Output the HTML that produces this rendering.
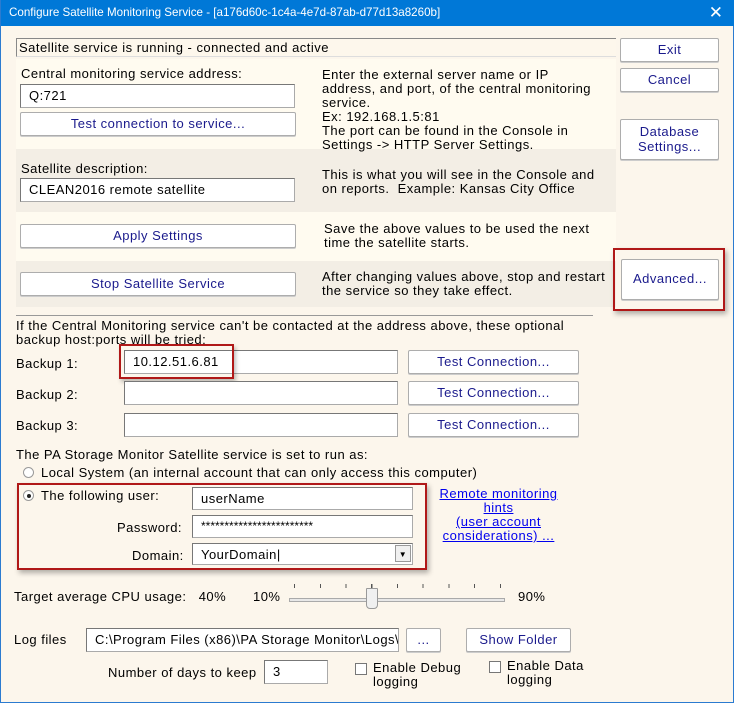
<!DOCTYPE html>
<html><head><meta charset="utf-8"><style>
*{box-sizing:border-box;margin:0;padding:0}
body{width:734px;height:703px;overflow:hidden;background:#fcf6ec;font-family:"Liberation Sans",Tahoma,sans-serif;font-size:13px;letter-spacing:0.48px;color:#000;position:relative;border:1px solid #2b7bd0;border-top:none}
.a{position:absolute;white-space:nowrap}
.tb{position:absolute;left:0;top:0;width:734px;height:26px;background:#0078d7;color:#fff;font-size:11.6px;letter-spacing:0;padding:6px 0 0 8px}
.btn{position:absolute;background:#fff;border:1px solid #adadad;border-radius:2px;box-shadow:0 1px 0 #ccc;color:#1a1a8c;text-align:center;line-height:1.1;display:flex;align-items:center;justify-content:center}
.in{position:absolute;background:#fff;border:1px solid #aaa;border-top-color:#777;border-left-color:#777;padding:3px 0 0 8px;white-space:nowrap;overflow:hidden}
.red{position:absolute;border:2px solid #b01818;box-shadow:2px 3px 5px rgba(0,0,0,.3)}
.lk{color:#0000ee;text-decoration:underline;text-align:center;line-height:14px}
.rad{position:absolute;width:11px;height:11px;border:1px solid #999;border-radius:50%;background:#fff}
.cb{position:absolute;width:12px;height:12px;border:1px solid #777;background:#fff}
</style></head><body>
<div class="tb">Configure Satellite Monitoring Service - [a176d60c-1c4a-4e7d-87ab-d77d13a8260b]<span style="position:absolute;right:12px;top:3px;font-size:17px">✕</span></div>

<div class="a" style="left:15px;top:38px;width:600px;height:19px;border:1px solid #888;border-right:none;border-bottom-color:#ddd;padding:1px 0 0 2px;background:#fdf7ec">Satellite service is running - connected and active</div>
<div class="a" style="left:15px;top:59px;width:600px;height:90px;background:#fffbf0"></div>
<div class="a" style="left:15px;top:149px;width:600px;height:63px;background:#f3eee5"></div>
<div class="a" style="left:15px;top:212px;width:600px;height:49px;background:#fffbf0"></div>
<div class="a" style="left:15px;top:261px;width:600px;height:46px;background:#f3eee5"></div>

<div class="a" style="left:20px;top:66px">Central monitoring service address:</div>
<div class="in" style="left:19px;top:84px;width:275px;height:24px">Q:721</div>
<div class="btn" style="left:19px;top:112px;width:276px;height:24px">Test connection to service...</div>
<div class="a" style="left:321px;top:68px;line-height:14px">Enter the external server name or IP<br>address, and port, of the central monitoring<br>service.<br>Ex: 192.168.1.5:81<br>The port can be found in the Console in<br>Settings -&gt; HTTP Server Settings.</div>

<div class="a" style="left:20px;top:161px">Satellite description:</div>
<div class="in" style="left:19px;top:178px;width:275px;height:24px">CLEAN2016 remote satellite</div>
<div class="a" style="left:321px;top:168px;line-height:14px">This is what you will see in the Console and<br>on reports.&nbsp; Example: Kansas City Office</div>

<div class="btn" style="left:19px;top:224px;width:276px;height:24px">Apply Settings</div>
<div class="a" style="left:323px;top:222px;line-height:14px">Save the above values to be used the next<br>time the satellite starts.</div>
<div class="btn" style="left:19px;top:272px;width:276px;height:24px">Stop Satellite Service</div>
<div class="a" style="left:321px;top:270px;line-height:14px">After changing values above, stop and restart<br>the service so they take effect.</div>

<div class="btn" style="left:619px;top:38px;width:99px;height:24px">Exit</div>
<div class="btn" style="left:619px;top:68px;width:99px;height:24px">Cancel</div>
<div class="btn" style="left:619px;top:119px;width:99px;height:41px">Database<br>Settings...</div>
<div class="red" style="left:612px;top:248px;width:112px;height:63px"></div>
<div class="btn" style="left:620px;top:259px;width:98px;height:41px">Advanced...</div>

<div class="a" style="left:15px;top:315px;width:577px;border-top:1px solid #999"></div>
<div class="a" style="left:15px;top:319px;line-height:14px">If the Central Monitoring service can't be contacted at the address above, these optional<br>backup host:ports will be tried:</div>
<div class="a" style="left:15px;top:356px">Backup 1:</div>
<div class="in" style="left:123px;top:350px;width:274px;height:24px">10.12.51.6.81</div>
<div class="btn" style="left:407px;top:350px;width:171px;height:24px">Test Connection...</div>
<div class="red" style="left:118px;top:344px;width:115px;height:35px;box-shadow:2px 3px 4px rgba(0,0,0,.25)"></div>
<div class="a" style="left:15px;top:387px">Backup 2:</div>
<div class="in" style="left:123px;top:381px;width:274px;height:24px"></div>
<div class="btn" style="left:407px;top:381px;width:171px;height:24px">Test Connection...</div>
<div class="a" style="left:15px;top:418px">Backup 3:</div>
<div class="in" style="left:123px;top:413px;width:274px;height:24px"></div>
<div class="btn" style="left:407px;top:413px;width:171px;height:24px">Test Connection...</div>

<div class="a" style="left:15px;top:447px">The PA Storage Monitor Satellite service is set to run as:</div>
<div class="rad" style="left:22px;top:467px"></div>
<div class="a" style="left:40px;top:465px">Local System (an internal account that can only access this computer)</div>
<div class="red" style="left:16px;top:483px;width:410px;height:87px"></div>
<div class="rad" style="left:22px;top:490px"></div><div class="a" style="left:26px;top:494px;width:4px;height:4px;background:#222;border-radius:50%"></div>
<div class="a" style="left:40px;top:488px">The following user:</div>
<div class="in" style="left:191px;top:487px;width:221px;height:23px">userName</div>
<div class="a" style="left:116px;top:520px">Password:</div>
<div class="in" style="left:191px;top:515px;width:221px;height:23px;font-size:12px;letter-spacing:0">************************</div>
<div class="a" style="left:131px;top:548px">Domain:</div>
<div class="in" style="left:191px;top:543px;width:221px;height:22px">YourDomain|</div>
<div class="a" style="left:394px;top:545px;width:16px;height:17px;border:1px solid #999;background:#f0f0f0;font-size:8px;text-align:center;line-height:17px">▼</div>
<div class="a lk" style="left:436px;top:487px;width:123px">Remote monitoring<br>hints<br>(user account<br>considerations) ...</div>

<div class="a" style="left:13px;top:589px">Target average CPU usage:&nbsp;&nbsp; 40%</div>
<div class="a" style="left:252px;top:589px">10%</div>
<div class="a" style="left:517px;top:589px">90%</div>
<div class="a" style="left:288px;top:598px;width:216px;height:4px;border:1px solid #aaa;background:#e8e8e8"></div>
<div class="a" style="left:365px;top:588px;width:12px;height:21px;background:#f0f0f0;border:1px solid #999;border-radius:1px 1px 4px 4px"></div>
<div class="a" style="left:293px;top:584px;width:208px;height:4px;background:repeating-linear-gradient(90deg,#555 0 1px,transparent 1px 25.75px)"></div>

<div class="a" style="left:13px;top:632px">Log files</div>
<div class="in" style="left:85px;top:628px;width:313px;height:24px">C:\Program Files (x86)\PA Storage Monitor\Logs\</div>
<div class="btn" style="left:405px;top:628px;width:35px;height:24px">...</div>
<div class="btn" style="left:465px;top:628px;width:105px;height:24px">Show Folder</div>
<div class="a" style="left:107px;top:665px">Number of days to keep</div>
<div class="in" style="left:263px;top:660px;width:64px;height:24px">3</div>
<div class="cb" style="left:354px;top:663px"></div>
<div class="a" style="left:372px;top:661px;line-height:14px">Enable Debug<br>logging</div>
<div class="cb" style="left:488px;top:661px"></div>
<div class="a" style="left:506px;top:659px;line-height:14px">Enable Data<br>logging</div>
</body></html>
